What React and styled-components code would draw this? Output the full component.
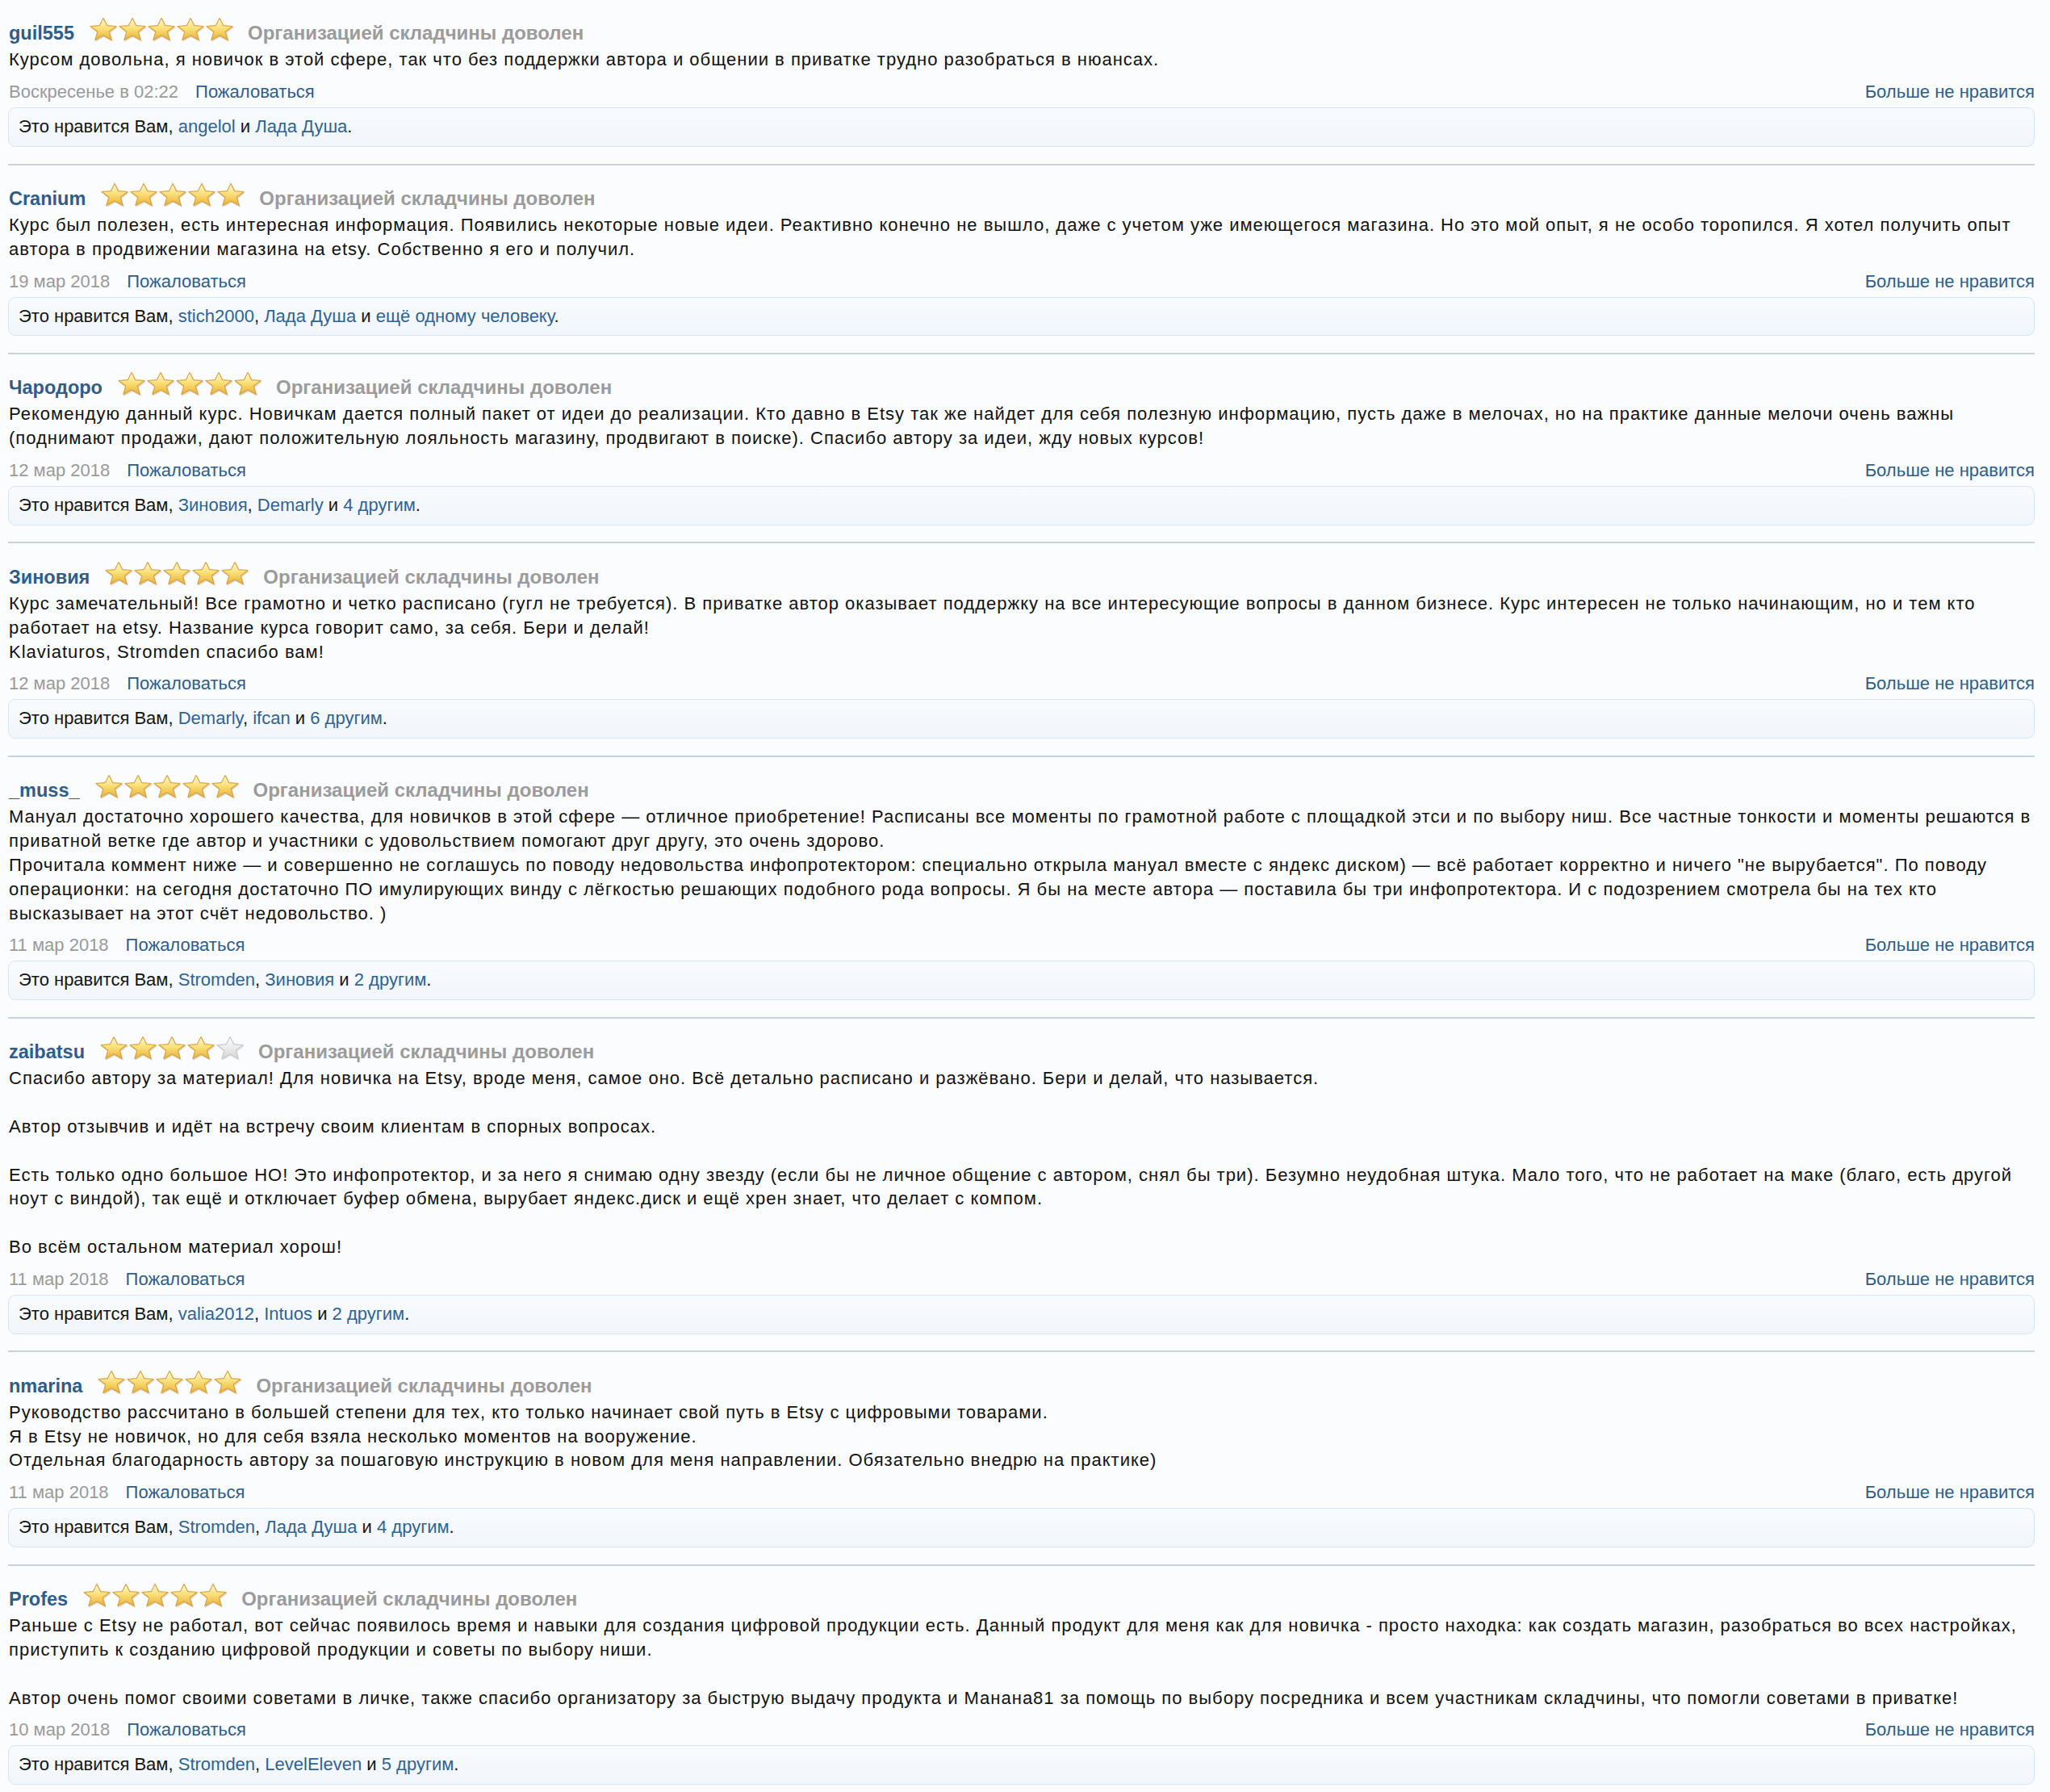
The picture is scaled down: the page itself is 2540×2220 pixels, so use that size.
import React from 'react';
import styled, { createGlobalStyle } from 'styled-components';

const GlobalStyle = createGlobalStyle`
  html, body { margin: 0; padding: 0; background: #fbfcfe; }
  body { font-family: "Liberation Sans", Arial, sans-serif; }
`;

const Page = styled.div`
  padding: 0 19px 0 10px;
  background: #fbfcfe;
  min-height: 2220px;
  box-sizing: border-box;
  font-family: "Liberation Sans", Arial, sans-serif;
`;

const Comment = styled.article`
  padding: 23.4px 0 20.6px;
  border-bottom: 2px solid #c6d2de;
`;

const Header = styled.div`
  display: flex;
  align-items: flex-start;
  height: 36px;
  padding-left: 1px;
`;

const Author = styled.a`
  font-size: 23.5px;
  line-height: 36px;
  font-weight: bold;
  color: #2e5d8c;
  text-decoration: none;
`;

const Stars = styled.span`
  display: flex;
  margin: -2px 17px 0 18px;
`;

const RatingLabel = styled.span`
  font-size: 24px;
  line-height: 36px;
  font-weight: bold;
  color: #9b9b9b;
`;

const Body = styled.div`
  font-size: 22px;
  line-height: 29.86px;
  letter-spacing: 1px;
  color: #111;
  white-space: pre;
  padding-left: 1px;
`;

const Meta = styled.div`
  display: flex;
  align-items: baseline;
  margin-top: 10px;
  font-size: 22px;
  line-height: 29.86px;
  padding-left: 1px;
`;

const DateText = styled.span`
  color: #9a9a9a;
`;

const MetaLink = styled.a`
  color: #2e5d8c;
  text-decoration: none;
  margin-left: ${(p) => (p.$right ? 'auto' : '21px')};
`;

const Likes = styled.div`
  margin-top: 4px;
  border: 1px solid #d5e5f5;
  border-radius: 9px;
  background: linear-gradient(#f8fbfe, #f1f6fc);
  padding: 8px 12px 9px;
  font-size: 22px;
  line-height: 29.86px;
  color: #141414;
`;

const NameLink = styled.a`
  color: #2f6394;
  text-decoration: none;
`;

const STAR_POINTS =
  '18,1.5 22.6,10.6 34,11.5 25.3,18.3 28.2,28.6 18,23 7.8,28.6 10.7,18.3 2,11.5 13.4,10.6';

function Star({ filled, id }) {
  return (
    <svg width="36" height="31" viewBox="0 0 36 31">
      <defs>
        <linearGradient id={`g${id}`} x1="0" y1="0" x2="0" y2="1">
          {filled ? (
            <>
              <stop offset="0" stopColor="#fffbe2" />
              <stop offset="0.45" stopColor="#fbe17a" />
              <stop offset="1" stopColor="#e8b03a" />
            </>
          ) : (
            <>
              <stop offset="0" stopColor="#fafafa" />
              <stop offset="0.5" stopColor="#ececec" />
              <stop offset="1" stopColor="#d4d4d4" />
            </>
          )}
        </linearGradient>
      </defs>
      <polygon
        points={STAR_POINTS}
        transform="translate(0.9,1.3)"
        fill={filled ? 'rgba(150,120,60,0.22)' : 'rgba(120,120,120,0.15)'}
        stroke={filled ? 'rgba(150,120,60,0.18)' : 'rgba(120,120,120,0.12)'}
        strokeWidth="1.6"
        strokeLinejoin="round"
      />
      <polygon
        points={STAR_POINTS}
        fill={`url(#g${id})`}
        stroke={filled ? '#d9a23e' : '#c8c8c8'}
        strokeWidth="1.1"
        strokeLinejoin="round"
      />
    </svg>
  );
}

const comments = [
  {
    author: 'guil555',
    rating: 5,
    body: [
      'Курсом довольна, я новичок в этой сфере, так что без поддержки автора и общении в приватке трудно разобраться в нюансах.',
    ],
    date: 'Воскресенье в 02:22',
    names: ['angelol', 'Лада Душа'],
  },
  {
    author: 'Cranium',
    rating: 5,
    body: [
      'Курс был полезен, есть интересная информация. Появились некоторые новые идеи. Реактивно конечно не вышло, даже с учетом уже имеющегося магазина. Но это мой опыт, я не особо торопился. Я хотел получить опыт',
      'автора в продвижении магазина на etsy. Собственно я его и получил.',
    ],
    date: '19 мар 2018',
    names: ['stich2000', 'Лада Душа'],
    more: 'ещё одному человеку',
  },
  {
    author: 'Чародоро',
    rating: 5,
    body: [
      'Рекомендую данный курс. Новичкам дается полный пакет от идеи до реализации. Кто давно в Etsy так же найдет для себя полезную информацию, пусть даже в мелочах, но на практике данные мелочи очень важны',
      '(поднимают продажи, дают положительную лояльность магазину, продвигают в поиске). Спасибо автору за идеи, жду новых курсов!',
    ],
    date: '12 мар 2018',
    names: ['Зиновия', 'Demarly'],
    more: '4 другим',
  },
  {
    author: 'Зиновия',
    rating: 5,
    body: [
      'Курс замечательный! Все грамотно и четко расписано (гугл не требуется). В приватке автор оказывает поддержку на все интересующие вопросы в данном бизнесе. Курс интересен не только начинающим, но и тем кто',
      'работает на etsy. Название курса говорит само, за себя. Бери и делай!',
      'Klaviaturos, Stromden спасибо вам!',
    ],
    date: '12 мар 2018',
    names: ['Demarly', 'ifcan'],
    more: '6 другим',
  },
  {
    author: '_muss_',
    rating: 5,
    body: [
      'Мануал достаточно хорошего качества, для новичков в этой сфере — отличное приобретение! Расписаны все моменты по грамотной работе с площадкой этси и по выбору ниш. Все частные тонкости и моменты решаются в',
      'приватной ветке где автор и участники с удовольствием помогают друг другу, это очень здорово.',
      'Прочитала коммент ниже — и совершенно не соглашусь по поводу недовольства инфопротектором: специально открыла мануал вместе с яндекс диском) — всё работает корректно и ничего "не вырубается". По поводу',
      'операционки: на сегодня достаточно ПО имулирующих винду с лёгкостью решающих подобного рода вопросы. Я бы на месте автора — поставила бы три инфопротектора. И с подозрением смотрела бы на тех кто',
      'высказывает на этот счёт недовольство. )',
    ],
    date: '11 мар 2018',
    names: ['Stromden', 'Зиновия'],
    more: '2 другим',
  },
  {
    author: 'zaibatsu',
    rating: 4,
    body: [
      'Спасибо автору за материал! Для новичка на Etsy, вроде меня, самое оно. Всё детально расписано и разжёвано. Бери и делай, что называется.',
      '',
      'Автор отзывчив и идёт на встречу своим клиентам в спорных вопросах.',
      '',
      'Есть только одно большое НО! Это инфопротектор, и за него я снимаю одну звезду (если бы не личное общение с автором, снял бы три). Безумно неудобная штука. Мало того, что не работает на маке (благо, есть другой',
      'ноут с виндой), так ещё и отключает буфер обмена, вырубает яндекс.диск и ещё хрен знает, что делает с компом.',
      '',
      'Во всём остальном материал хорош!',
    ],
    date: '11 мар 2018',
    names: ['valia2012', 'Intuos'],
    more: '2 другим',
  },
  {
    author: 'nmarina',
    rating: 5,
    body: [
      'Руководство рассчитано в большей степени для тех, кто только начинает свой путь в Etsy с цифровыми товарами.',
      'Я в Etsy не новичок, но для себя взяла несколько моментов на вооружение.',
      'Отдельная благодарность автору за пошаговую инструкцию в новом для меня направлении. Обязательно внедрю на практике)',
    ],
    date: '11 мар 2018',
    names: ['Stromden', 'Лада Душа'],
    more: '4 другим',
  },
  {
    author: 'Profes',
    rating: 5,
    body: [
      'Раньше с Etsy не работал, вот сейчас появилось время и навыки для создания цифровой продукции есть. Данный продукт для меня как для новичка - просто находка: как создать магазин, разобраться во всех настройках,',
      'приступить к созданию цифровой продукции и советы по выбору ниши.',
      '',
      'Автор очень помог своими советами в личке, также спасибо организатору за быструю выдачу продукта и Манана81 за помощь по выбору посредника и всем участникам складчины, что помогли советами в приватке!',
    ],
    date: '10 мар 2018',
    names: ['Stromden', 'LevelEleven'],
    more: '5 другим',
  },
];

function LikesLine({ names, more }) {
  return (
    <Likes>
      Это нравится Вам, <NameLink href="#">{names[0]}</NameLink>
      {more ? (
        <>
          , <NameLink href="#">{names[1]}</NameLink> и <NameLink href="#">{more}</NameLink>.
        </>
      ) : (
        <>
          {' '}и <NameLink href="#">{names[1]}</NameLink>.
        </>
      )}
    </Likes>
  );
}

export default function App() {
  return (
    <>
      <GlobalStyle />
      <Page>
        {comments.map((c, ci) => (
          <Comment key={ci}>
            <Header>
              <Author href="#">{c.author}</Author>
              <Stars>
                {[0, 1, 2, 3, 4].map((i) => (
                  <Star key={i} id={`${ci}-${i}`} filled={i < c.rating} />
                ))}
              </Stars>
              <RatingLabel>Организацией складчины доволен</RatingLabel>
            </Header>
            <Body>{c.body.join('\n')}</Body>
            <Meta>
              <DateText>{c.date}</DateText>
              <MetaLink href="#">Пожаловаться</MetaLink>
              <MetaLink href="#" $right>
                Больше не нравится
              </MetaLink>
            </Meta>
            <LikesLine names={c.names} more={c.more} />
          </Comment>
        ))}
      </Page>
    </>
  );
}
